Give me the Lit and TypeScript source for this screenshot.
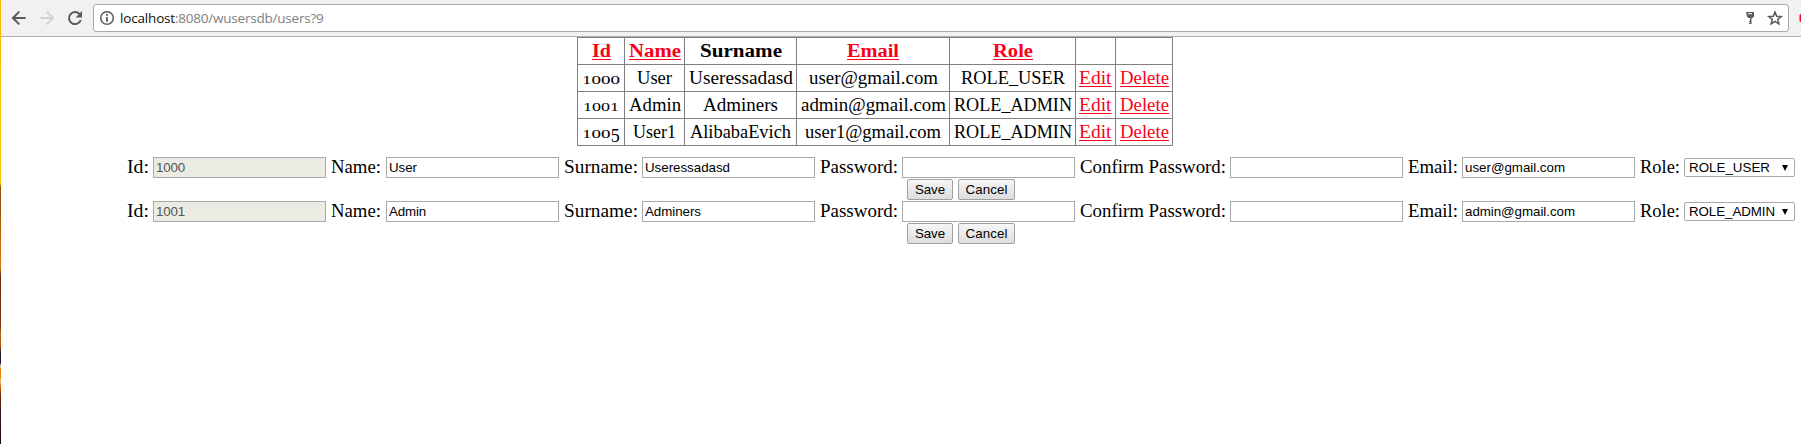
import { LitElement, html, css, svg } from "lit";
import { customElement } from "lit/decorators.js";
import { styleMap } from "lit/directives/style-map.js";

const SERIF = '"Liberation Serif", serif';
const ctx = document.createElement("canvas").getContext("2d")!;

/** Text tracked so that it spans the given width. */
function fit(text: string, width: number, font: string, cls = "t") {
  ctx.font = font;
  const spacing = (width - ctx.measureText(text).width) / text.length;
  return html`<span class=${cls} style=${styleMap({ letterSpacing: `${spacing.toFixed(3)}px` })}>${text}</span>`;
}

/** Text whose letters are widened so that it spans the given width. */
function stretch(text: string, width: number, font: string, cls = "") {
  ctx.font = font;
  const scale = width / ctx.measureText(text).width;
  return html`<span class="stretch ${cls}" style=${styleMap({ width: `${width}px`, transform: `scaleX(${scale.toFixed(4)})` })}>${text}</span>`;
}
const body = (t: string, w: number, cls = "") => stretch(t, w, `18px ${SERIF}`, cls);
const bold = (t: string, w: number, cls = "") => stretch(t, w, `bold 18px ${SERIF}`, cls);
const sans = (t: string, w: number) => fit(t, w, '13.33px "Liberation Sans"');

type Txt = [string, number];
interface User { id: string; name: Txt; surname: Txt; email: Txt; role: Txt; }

const users: User[] = [
  { id: "1000", name: ["User", 35], surname: ["Useressadasd", 104], email: ["user@gmail.com", 129], role: ["ROLE_USER", 104] },
  { id: "1001", name: ["Admin", 52], surname: ["Adminers", 75], email: ["admin@gmail.com", 145], role: ["ROLE_ADMIN", 118] },
  { id: "1005", name: ["User1", 43], surname: ["AlibabaEvich", 101], email: ["user1@gmail.com", 136], role: ["ROLE_ADMIN", 118] },
];

const forms: User[] = [
  { id: "1000", name: ["User", 28], surname: ["Useressadasd", 85], email: ["user@gmail.com", 100], role: ["ROLE_USER", 81] },
  { id: "1001", name: ["Admin", 37], surname: ["Adminers", 56], email: ["admin@gmail.com", 110], role: ["ROLE_ADMIN", 86] },
];

@customElement("app-root")
export class AppRoot extends LitElement {
  static styles = css`
    :host { display: block; height: 444px; overflow: hidden; background: #fff; }
    .window { display: grid; grid-template-columns: 1px 1800px; height: 444px; }
    .edge { background: linear-gradient(#ffb400 0, #ffc000 150px, #ffc400 183px, #9c4a08 187px, #a85006 215px, #c96c04 245px, #d27508 268px, #6b2a10 276px, #7c3512 325px, #c0640c 335px, #a04a10 347px, #201428 353px, #241830 363px, #e0d0c8 366px, #e07808 370px, #f08c10 378px, #f0c890 381px, #d86c08 386px, #702c14 395px, #3c1616 410px, #1c0a10 444px); }
    .toolbar { display: flex; align-items: flex-start; box-sizing: border-box; height: 37px; padding: 4px 0 0 8px; background: #f1f1f1; border-bottom: 1px solid #b0b0b0; }
    .nav { width: 84px; height: 28px; flex: none; }
    .address { display: flex; box-sizing: border-box; width: 1696px; height: 28px; border: 1px solid #a8a8a8; border-radius: 3px; background: #fff; }
    .info { width: 26px; height: 26px; flex: none; }
    .url { flex: 1; font: 13.5px/26px "Open Sans", sans-serif; color: #808080; white-space: nowrap; }
    .host { color: #111; }
    .actions { width: 60px; height: 26px; flex: none; }
    .ext { width: 12px; height: 28px; flex: none; }
    .stretch { display: inline-block; transform-origin: 0 50%; text-align: left; white-space: nowrap; }
    .table { display: grid; grid-template-columns: 47px 60px 112px 153px 126px 40px 57px; width: 595px; margin-left: 576px; border: solid #808080; border-width: 1px 0 0 1px; }
    .cell { box-sizing: border-box; height: 27px; border: solid #808080; border-width: 0 1px 1px 0; text-align: center; font: 18px/27px "Liberation Serif", serif; color: #000; white-space: nowrap; }
    .head { font-weight: bold; }
    .link { color: #fb0018; text-decoration: underline; text-decoration-thickness: 1px; text-underline-offset: 2px; }
    .small { font-size: 13.2px; }
    .drop { display: inline-block; transform: translateY(4px); }
    .forms { padding-top: 11px; }
    .form { height: 44px; }
    .fields { display: grid; grid-template-columns: 26px 173px 60px 173px 83px 173px 87px 173px 155px 173px 59px 173px 49px 111px; margin-left: 126px; height: 22px; }
    .label { padding-left: 4.500px; font: 18px/20px "Liberation Serif", serif; white-space: nowrap; }
    .label.first { padding-left: 0; }
    .box { box-sizing: border-box; height: 21px; border: 1px solid #a9a9a9; padding-left: 2px; font: 13.33px/19px "Liberation Sans", sans-serif; white-space: nowrap; }
    .off { background: #ebebe4; color: #545454; }
    .select { display: flex; justify-content: space-between; align-items: center; box-sizing: border-box; height: 19px; margin-top: 1px; padding: 0 6px 0 4px; border: 1px solid #a9a9a9; border-radius: 2px; font: 13.33px/17px "Liberation Sans", sans-serif; white-space: nowrap; }
    .arrow { width: 6px; height: 6px; }
    .buttons { display: flex; gap: 5px; margin-left: 906px; }
    .btn { box-sizing: border-box; height: 21px; width: 46px; padding: 0; margin: 0; border: 1px solid #a0a0a0; border-radius: 2px; background: linear-gradient(#f6f6f6, #dddddd); font: 13.33px/19px "Liberation Sans", sans-serif; color: #000; text-align: center; }
    .wide { width: 57px; }
  `;

  private toolbar() {
    return html`<div class="toolbar">
      <svg class="nav" viewBox="9 4 84 28" fill="none" stroke="#5a5a5a" stroke-width="2">
        ${svg`<path d="M25.6 18H13.4M19.3 11.6L12.9 18l6.4 6.4"/>
        <path stroke="#d2d2d2" d="M40.2 18h12.4M46.5 11.600l6.400 6.400-6.400 6.400"/>
        <path d="M79.600 14.200A6 6 0 1 0 80.700 20"/><path d="M82 11v6.400h-6.400z" fill="#5a5a5a" stroke="none"/>`}
      </svg>
      <div class="address">
        <svg class="info" viewBox="94 5 26 26"><circle cx="107" cy="18" r="6.300" fill="none" stroke="#5a5a5a" stroke-width="1.500"/><path d="M106.100 14h1.800v1.800h-1.800zM106.100 17h1.800v4.800h-1.800z" fill="#5a5a5a"/></svg>
        <div class="url">${fit("localhost", 55, '13.5px "Open Sans"', "host")}${fit(":8080/wusersdb/users?9", 148.5, '13.5px "Open Sans"')}</div>
        <svg class="actions" viewBox="1728 5 60 26"><path fill-rule="evenodd" d="M1746 12h8v4.500l-1.500 1.500h-1V24h-2.500v-1h1v-1h-1v-1h1v-3h-1.500l-1.500-1.500zM1748 13.200v1h4v-1z" fill="#5a5a5a"/><path d="M1775 12l1.700 4.200 4.500.3-3.500 2.900 1.200 4.400-3.900-2.500-3.900 2.500 1.200-4.400-3.500-2.900 4.500-.3z" fill="none" stroke="#5a5a5a" stroke-width="1.500"/></svg>
      </div>
      <svg class="ext" viewBox="1789 4 12 28"><rect x="1799.500" y="14" width="6" height="8" rx="1.500" fill="#fb0028"/></svg>
    </div>`;
  }

  /** Ids are set in old-style figures: 0 and 1 at x-height, 5 below the line. */
  private idCell(id: string) {
    const small = (t: string, w: number) => stretch(t, w, `13.2px ${SERIF}`, "small");
    return id.endsWith("5")
      ? html`${small(id.slice(0, -1), 28.5)}<span class="drop">${id.slice(-1)}</span>`
      : small(id, id === "1001" ? 36 : 38);
  }

  private row(u: User) {
    return html`
      <div class="cell">${this.idCell(u.id)}</div>
      <div class="cell">${body(...u.name)}</div>
      <div class="cell">${body(...u.surname)}</div>
      <div class="cell">${body(...u.email)}</div>
      <div class="cell">${body(...u.role)}</div>
      <div class="cell">${body("Edit", 32.5, "link")}</div>
      <div class="cell">${body("Delete", 49, "link")}</div>`;
  }

  private form(f: User) {
    const field = (label: string, w: number, value?: Txt) => html`
      <div class="label">${body(label, w)}</div>
      <div class="box">${value ? sans(...value) : ""}</div>`;
    return html`<div class="form">
      <div class="fields">
        <div class="label first">${body("Id:", 22)}</div>
        <div class="box off">${sans(f.id, 29)}</div>
        ${field("Name:", 50, f.name)}
        ${field("Surname:", 74, f.surname)}
        ${field("Password:", 78)}
        ${field("Confirm Password:", 146)}
        ${field("Email:", 50, f.email)}
        <div class="label">${body("Role:", 40)}</div>
        <div class="select">${sans(...f.role)}<svg class="arrow" viewBox="0 0 7 7"><path d="M0 0h7L3.5 7z"/></svg></div>
      </div>
      <div class="buttons"><button class="btn">${sans("Save", 30)}</button><button class="btn wide">${sans("Cancel", 42)}</button></div>
    </div>`;
  }

  render() {
    return html`<div class="window">
      <div class="edge"></div>
      <div class="page">
        ${this.toolbar()}
        <div class="table">
          <div class="cell head">${bold("Id", 19, "link")}</div>
          <div class="cell head">${bold("Name", 52, "link")}</div>
          <div class="cell head">${bold("Surname", 82)}</div>
          <div class="cell head">${bold("Email", 52, "link")}</div>
          <div class="cell head">${bold("Role", 40, "link")}</div>
          <div class="cell"></div><div class="cell"></div>
          ${users.map((u) => this.row(u))}
        </div>
        <div class="forms">${forms.map((f) => this.form(f))}</div>
      </div>
    </div>`;
  }
}
